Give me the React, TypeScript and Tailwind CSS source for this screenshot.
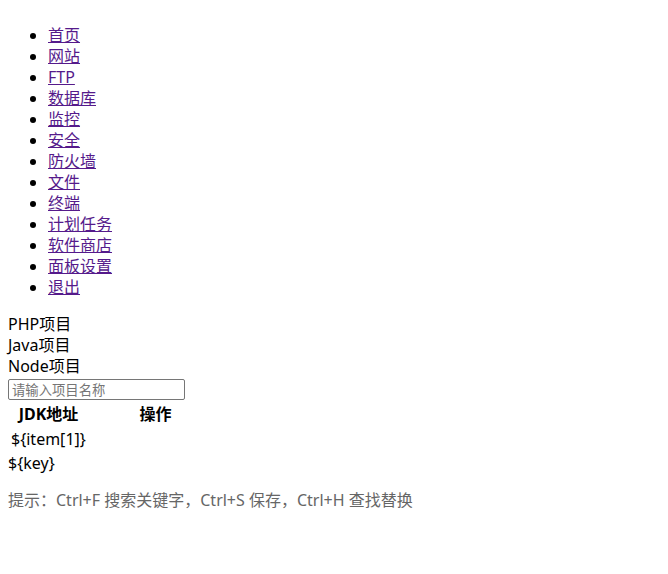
import React from "react";

const links = ["首页", "网站", "FTP", "数据库", "监控", "安全", "防火墙", "文件", "终端", "计划任务", "软件商店", "面板设置", "退出"];

export default function App() {
  return (
    <div
      className="px-2 text-[16px] leading-[21px] text-black bg-white min-h-[574px] overflow-hidden"
      style={{ fontFamily: '"Noto Sans", "Noto Sans CJK SC", sans-serif' }}
    >
      <div className="-mt-[21px] h-[24px] text-[20px] leading-[24px] font-bold">宝塔Linux面板</div>
      <ul className="mt-[22px] mb-[16px] list-disc pl-10">
        {links.map((l) => (
          <li key={l} className="leading-[21px]">
            <a href="#" className="text-[#551a8b] underline">
              {l}
            </a>
          </li>
        ))}
      </ul>
      <div>PHP项目</div>
      <div>Java项目</div>
      <div>Node项目</div>
      <div className="h-[24px] flex items-start pt-[2px]">
        <input
          placeholder="请输入项目名称"
          className="w-[177px] h-[21px] border border-[#767676] rounded-[2px] px-[3px] text-[13.33px] leading-[17px] placeholder:text-[#757575] outline-none"
        />
      </div>
      <table className="border-separate border-spacing-[2px]">
        <thead>
          <tr>
            <th className="w-[75px] p-[1px] font-bold text-center">JDK地址</th>
            <th className="w-[133px] p-[1px] font-bold text-center">操作</th>
          </tr>
        </thead>
        <tbody>
          <tr>
            <td className="p-[1px]">${"{item[1]}"}</td>
            <td className="p-[1px]"></td>
          </tr>
        </tbody>
      </table>
      <div>${"{key}"}</div>
      <p className="mt-[16px] text-[#666666]">提示：Ctrl+F 搜索关键字，Ctrl+S 保存，Ctrl+H 查找替换</p>
    </div>
  );
}
